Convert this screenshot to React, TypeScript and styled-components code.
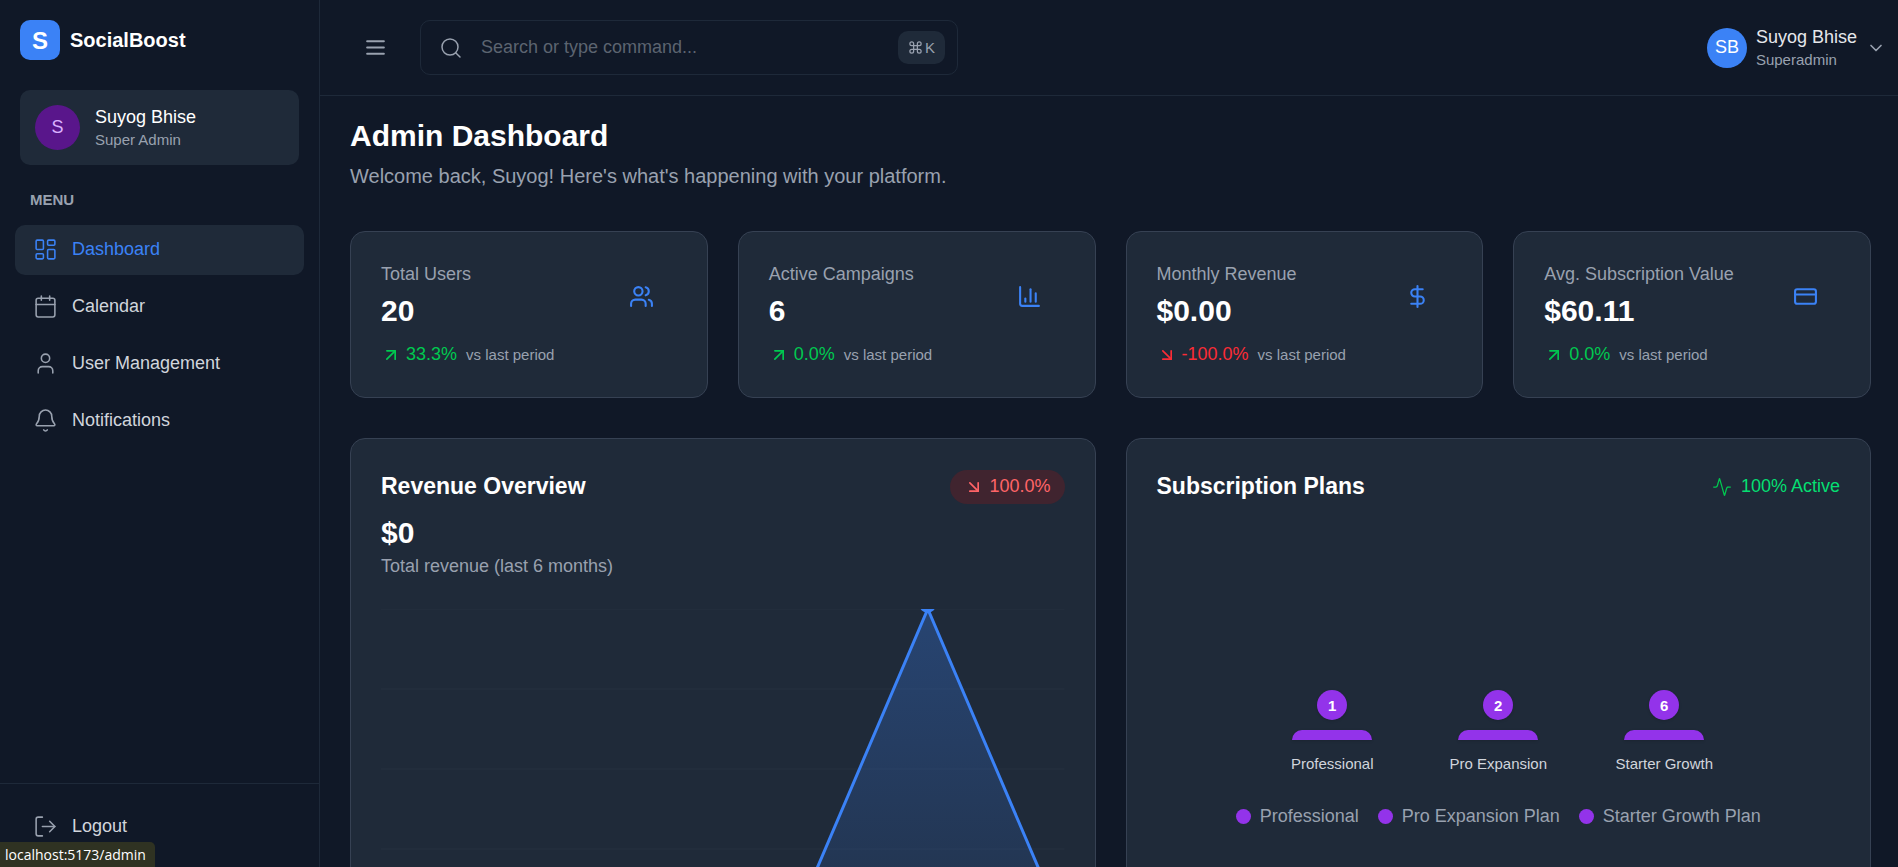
import React from 'react';
import styled, { createGlobalStyle } from 'styled-components';
import {
  Activity,
  ArrowDownRight,
  ArrowUpRight,
  Bell,
  Calendar,
  ChartColumn,
  ChevronDown,
  Command,
  CreditCard,
  DollarSign,
  LayoutDashboard,
  LogOut,
  Search,
  User,
  Users,
} from 'lucide-react';

const color = {
  page: '#101827',
  panel: '#1f2a39',
  line: '#1e2939',
  cardLine: '#364153',
  text: '#ffffff',
  soft: '#d1d5dc',
  muted: '#99a1af',
  dim: '#5c6470',
  blue: '#3b82f6',
  purple: '#9333ea',
  green: '#00c950',
  red: '#fb2c36',
};

const GlobalStyle = createGlobalStyle`
  *, *::before, *::after { box-sizing: border-box; }
  body {
    margin: 0;
    background: ${color.page};
    color: ${color.text};
    font-family: 'Liberation Sans', Arial, sans-serif;
    font-size: 18px;
    line-height: 25px;
    overflow: hidden;
  }
  h1, h2, p, ul, figure { margin: 0; padding: 0; }
  ul { list-style: none; }
  svg { display: block; flex-shrink: 0; }
  button, input { font: inherit; color: inherit; border: 0; background: none; padding: 0; }
  button { cursor: pointer; }
`;

const Shell = styled.div`
  display: flex;
  height: 100vh;
  overflow: hidden;
`;

/* Sidebar */

const Sidebar = styled.aside`
  display: flex;
  flex-direction: column;
  flex: 0 0 320px;
  border-right: 1px solid ${color.line};
`;

const Brand = styled.a`
  display: flex;
  align-items: center;
  gap: 10px;
  padding: 20px;
  color: ${color.text};
  font-size: 20px;
  font-weight: 700;
  text-decoration: none;
`;

const BrandMark = styled.span`
  display: grid;
  place-items: center;
  width: 40px;
  height: 40px;
  border-radius: 10px;
  background: ${color.blue};
  font-size: 24px;
`;

const Profile = styled.section`
  display: flex;
  align-items: center;
  gap: 15px;
  margin: 10px 20px 0;
  padding: 15px;
  border-radius: 10px;
  background: ${color.panel};
`;

const Avatar = styled.span<{ $size: number; $bg: string; $fg: string }>`
  display: grid;
  place-items: center;
  width: ${(p) => p.$size}px;
  height: ${(p) => p.$size}px;
  border-radius: 50%;
  background: ${(p) => p.$bg};
  color: ${(p) => p.$fg};
`;

const Person = styled.span`
  display: flex;
  flex-direction: column;
  text-align: left;
`;

const PersonName = styled.span<{ $fg?: string }>`
  color: ${(p) => p.$fg ?? color.text};
  line-height: 25px;
`;

const PersonRole = styled.span`
  color: ${color.muted};
  font-size: 15px;
  line-height: 20px;
`;

const MenuTitle = styled.h2`
  padding: 25px 30px 15px;
  color: ${color.muted};
  font-size: 15px;
  font-weight: 700;
  line-height: 20px;
`;

const Nav = styled.nav`
  flex: 1;
  padding: 0 15px;
`;

const NavList = styled.ul`
  display: flex;
  flex-direction: column;
  gap: 7px;
`;

const NavLink = styled.a<{ $active?: boolean }>`
  display: flex;
  align-items: center;
  gap: 14px;
  height: 50px;
  padding: 0 18px 2px;
  border-radius: 10px;
  background: ${(p) => (p.$active ? color.panel : 'transparent')};
  color: ${(p) => (p.$active ? color.blue : color.soft)};
  text-decoration: none;

  svg {
    color: ${(p) => (p.$active ? color.blue : color.muted)};
  }
`;

const SidebarFooter = styled.div`
  padding: 17px 15px 16px;
  border-top: 1px solid ${color.line};
`;

const LogoutButton = styled.button`
  display: flex;
  align-items: center;
  gap: 14px;
  width: 100%;
  height: 50px;
  padding: 0 18px;
  color: ${color.soft};

  svg {
    color: ${color.muted};
  }
`;

/* Top bar */

const Content = styled.div`
  display: flex;
  flex: 1;
  flex-direction: column;
  min-width: 0;
`;

const TopBar = styled.header`
  display: flex;
  align-items: center;
  flex: 0 0 96px;
  padding: 0 12px 0 30px;
  border-bottom: 1px solid ${color.line};
`;

const IconButton = styled.button`
  display: grid;
  place-items: center;
  width: 50px;
  height: 50px;
  color: ${color.muted};
`;

const SearchBox = styled.label`
  display: flex;
  align-items: center;
  gap: 18px;
  width: 538px;
  height: 55px;
  margin-left: 20px;
  padding: 0 12px 0 18px;
  border: 1px solid ${color.line};
  border-radius: 10px;
  color: ${color.muted};
`;

const SearchInput = styled.input`
  flex: 1;
  min-width: 0;
  outline: 0;

  &::placeholder {
    color: ${color.dim};
    opacity: 1;
  }
`;

const Shortcut = styled.kbd`
  display: flex;
  align-items: center;
  gap: 2px;
  height: 33px;
  padding: 0 10px;
  border-radius: 10px;
  background: ${color.panel};
  font-family: inherit;
  font-size: 15px;
`;

const Account = styled.button`
  display: flex;
  align-items: center;
  gap: 9px;
  margin-left: auto;
`;

/* Page */

const Page = styled.main`
  flex: 1;
  min-height: 0;
  padding: 20px 27px 40px 30px;
  overflow: hidden;
`;

const Title = styled.h1`
  font-size: 30px;
  font-weight: 700;
  line-height: 40px;
`;

const Subtitle = styled.p`
  margin: 5px 0 40px;
  color: ${color.muted};
  font-size: 20px;
  line-height: 30px;
`;

const StatGrid = styled.div`
  display: grid;
  grid-template-columns: repeat(4, minmax(0, 1fr));
  gap: 30px;
`;

const PanelGrid = styled.div`
  display: grid;
  grid-template-columns: repeat(2, minmax(0, 1fr));
  gap: 30px;
  margin-top: 40px;
`;

const Card = styled.section`
  padding: 30px;
  border: 1px solid ${color.cardLine};
  border-radius: 15px;
  background: ${color.panel};
`;

const StatCard = styled(Card)`
  display: flex;
  justify-content: space-between;
`;

const Label = styled.p`
  color: ${color.muted};
`;

const Figure = styled.p`
  margin-top: 5px;
  font-size: 30px;
  font-weight: 700;
  line-height: 38px;
`;

const Trend = styled.p<{ $up: boolean }>`
  display: flex;
  align-items: center;
  gap: 5px;
  margin-top: 12px;
  color: ${(p) => (p.$up ? color.green : color.red)};
`;

const TrendNote = styled.span`
  margin-left: 4px;
  color: ${color.muted};
  font-size: 15px;
`;

const StatIcon = styled.span`
  display: grid;
  place-items: center;
  width: 70px;
  height: 68px;
  color: ${color.blue};
`;

const PanelHead = styled.div`
  display: flex;
  align-items: center;
  justify-content: space-between;
  height: 35px;
`;

const PanelTitle = styled.h2`
  font-size: 23px;
  font-weight: 700;
  line-height: 35px;
`;

const DropPill = styled.span`
  display: flex;
  align-items: center;
  gap: 5px;
  height: 34px;
  padding: 0 14px;
  border-radius: 17px;
  background: #40242f;
  color: #ff6467;
`;

const Status = styled.span`
  display: flex;
  align-items: center;
  gap: 9px;
  color: #05df72;

  svg {
    color: ${color.green};
  }
`;

const Total = styled(Figure)`
  margin-top: 10px;
`;

const TotalCaption = styled(Label)`
  margin: 2px 0 30px;
`;

const Chart = styled.svg`
  width: 100%;
  height: 320px;
`;

const Bars = styled.ul`
  display: flex;
  align-items: flex-end;
  justify-content: center;
  gap: 68px;
  height: 270px;
`;

const BarColumn = styled.li`
  display: flex;
  flex-direction: column;
  align-items: center;
  width: 98px;
`;

const Count = styled.span`
  display: grid;
  place-items: center;
  width: 30px;
  height: 30px;
  margin-bottom: 10px;
  border-radius: 50%;
  background: ${color.purple};
  box-shadow: 0 1px 3px rgba(0, 0, 0, 0.15);
  font-size: 15px;
  font-weight: 700;
`;

const Bar = styled.span`
  width: 80px;
  height: 10px;
  border-radius: 10px 10px 0 0;
  background: ${color.purple};
  box-shadow: 0 1px 3px rgba(0, 0, 0, 0.15);
`;

const BarLabel = styled.span`
  margin-top: 14px;
  color: ${color.soft};
  font-size: 15px;
  line-height: 20px;
  white-space: nowrap;
`;

const Legend = styled.ul`
  display: flex;
  justify-content: center;
  gap: 19px;
  margin-top: 30px;
`;

const LegendItem = styled.li`
  display: flex;
  align-items: center;
  gap: 9px;
  color: ${color.muted};

  &::before {
    content: '';
    width: 15px;
    height: 15px;
    border-radius: 50%;
    background: ${color.purple};
  }
`;

const LinkPreview = styled.output`
  position: fixed;
  left: 0;
  bottom: 0;
  height: 25px;
  padding: 0 9px 0 5px;
  border-radius: 0 5px 0 0;
  background: #2f3222;
  font-family: 'Open Sans', 'Noto Sans', sans-serif;
  font-size: 14px;
  line-height: 26px;
`;

const navItems = [
  { label: 'Dashboard', icon: LayoutDashboard, active: true },
  { label: 'Calendar', icon: Calendar },
  { label: 'User Management', icon: User },
  { label: 'Notifications', icon: Bell },
];

const stats = [
  { label: 'Total Users', value: '20', change: '33.3%', up: true, icon: Users },
  { label: 'Active Campaigns', value: '6', change: '0.0%', up: true, icon: ChartColumn },
  { label: 'Monthly Revenue', value: '$0.00', change: '-100.0%', up: false, icon: DollarSign },
  { label: 'Avg. Subscription Value', value: '$60.11', change: '0.0%', up: true, icon: CreditCard },
];

const plans = [
  { short: 'Professional', name: 'Professional', count: 1 },
  { short: 'Pro Expansion', name: 'Pro Expansion Plan', count: 2 },
  { short: 'Starter Growth', name: 'Starter Growth Plan', count: 6 },
];

function MenuIcon() {
  return (
    <svg
      width="25"
      height="25"
      viewBox="0 0 24 24"
      fill="none"
      stroke="currentColor"
      strokeWidth="2"
      strokeLinecap="round"
      aria-hidden="true"
    >
      <path d="M4 6h16M4 12h16M4 18h16" />
    </svg>
  );
}

function RevenueChart() {
  return (
    <Chart viewBox="0 0 684 320" preserveAspectRatio="none" role="img" aria-label="Revenue, last 6 months">
      <defs>
        <linearGradient id="revenueFill" x1="0" y1="0" x2="0" y2="1">
          <stop offset="0%" stopColor={color.blue} stopOpacity="0.3" />
          <stop offset="100%" stopColor={color.blue} stopOpacity="0.1" />
        </linearGradient>
      </defs>
      {[0, 80, 160, 240, 320].map((y) => (
        <line key={y} x1="0" x2="684" y1={y} y2={y} stroke="#ffffff" strokeOpacity="0.015" strokeWidth="2" />
      ))}
      <path d="M0 320H410.4L547.2 0L684 320Z" fill="url(#revenueFill)" />
      <path d="M0 320H410.4L547.2 0L684 320" fill="none" stroke={color.blue} strokeWidth="3" strokeLinejoin="round" />
      <path d="M540 0H554Q552 3 547.2 4Q542 3 540 0Z" fill={color.blue} />
    </Chart>
  );
}

export default function App() {
  return (
    <>
      <GlobalStyle />
      <Shell>
        <Sidebar>
          <Brand href="#">
            <BrandMark>S</BrandMark>
            SocialBoost
          </Brand>
          <Profile>
            <Avatar $size={45} $bg="#59168b" $fg="#dab2ff">S</Avatar>
            <Person>
              <PersonName>Suyog Bhise</PersonName>
              <PersonRole>Super Admin</PersonRole>
            </Person>
          </Profile>
          <MenuTitle>MENU</MenuTitle>
          <Nav>
            <NavList>
              {navItems.map(({ label, icon: Icon, active }) => (
                <li key={label}>
                  <NavLink href="#" $active={active}>
                    <Icon size={25} strokeWidth={1.5} />
                    {label}
                  </NavLink>
                </li>
              ))}
            </NavList>
          </Nav>
          <SidebarFooter>
            <LogoutButton type="button">
              <LogOut size={25} strokeWidth={1.5} />
              Logout
            </LogoutButton>
          </SidebarFooter>
        </Sidebar>

        <Content>
          <TopBar>
            <IconButton type="button" aria-label="Toggle menu">
              <MenuIcon />
            </IconButton>
            <SearchBox>
              <Search size={24} strokeWidth={1.5} />
              <SearchInput type="text" aria-label="Search" placeholder="Search or type command..." />
              <Shortcut>
                <Command size={15} />K
              </Shortcut>
            </SearchBox>
            <Account type="button">
              <Avatar $size={40} $bg={color.blue} $fg={color.text}>SB</Avatar>
              <Person>
                <PersonName $fg="#e5e7eb">Suyog Bhise</PersonName>
                <PersonRole>Superadmin</PersonRole>
              </Person>
              <ChevronDown size={20} strokeWidth={2} color={color.muted} />
            </Account>
          </TopBar>

          <Page>
            <Title>Admin Dashboard</Title>
            <Subtitle>Welcome back, Suyog! Here's what's happening with your platform.</Subtitle>

            <StatGrid>
              {stats.map(({ label, value, change, up, icon: Icon }) => (
                <StatCard key={label}>
                  <div>
                    <Label>{label}</Label>
                    <Figure>{value}</Figure>
                    <Trend $up={up}>
                      {up ? <ArrowUpRight size={20} /> : <ArrowDownRight size={20} />}
                      {change}
                      <TrendNote>vs last period</TrendNote>
                    </Trend>
                  </div>
                  <StatIcon>
                    <Icon size={25} />
                  </StatIcon>
                </StatCard>
              ))}
            </StatGrid>

            <PanelGrid>
              <Card>
                <PanelHead>
                  <PanelTitle>Revenue Overview</PanelTitle>
                  <DropPill>
                    <ArrowDownRight size={20} />
                    100.0%
                  </DropPill>
                </PanelHead>
                <Total>$0</Total>
                <TotalCaption>Total revenue (last 6 months)</TotalCaption>
                <RevenueChart />
              </Card>

              <Card>
                <PanelHead>
                  <PanelTitle>Subscription Plans</PanelTitle>
                  <Status>
                    <Activity size={20} strokeWidth={1.5} />
                    100% Active
                  </Status>
                </PanelHead>
                <Bars>
                  {plans.map((plan) => (
                    <BarColumn key={plan.short}>
                      <Count>{plan.count}</Count>
                      <Bar />
                      <BarLabel>{plan.short}</BarLabel>
                    </BarColumn>
                  ))}
                </Bars>
                <Legend>
                  {plans.map((plan) => (
                    <LegendItem key={plan.name}>{plan.name}</LegendItem>
                  ))}
                </Legend>
              </Card>
            </PanelGrid>
          </Page>
        </Content>
      </Shell>
      <LinkPreview>localhost:5173/admin</LinkPreview>
    </>
  );
}
